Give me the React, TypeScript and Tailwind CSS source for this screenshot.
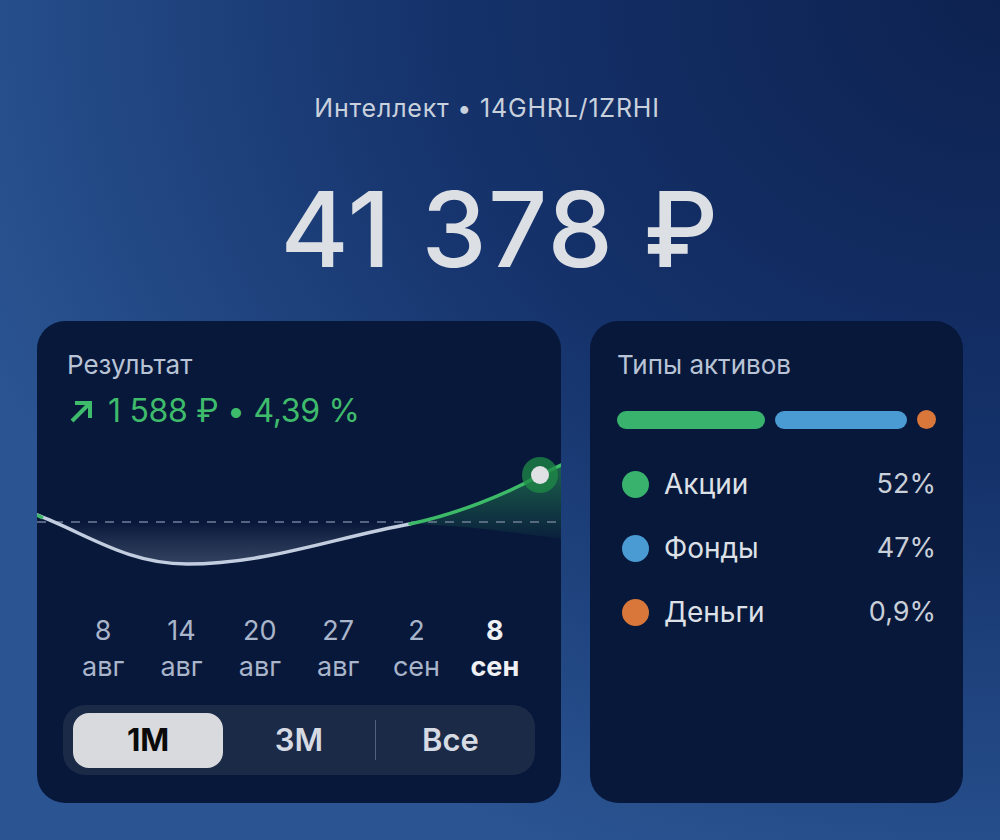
import React from "react";

const dates = [
  ["8", "авг"],
  ["14", "авг"],
  ["20", "авг"],
  ["27", "авг"],
  ["2", "сен"],
  ["8", "сен"],
];

function Chart() {
  return (
    <svg width="524" height="160" viewBox="0 0 524 160" className="block">
      <defs>
        <linearGradient id="g1" x1="0" y1="0" x2="0" y2="1">
          <stop offset="0" stopColor="#2fae5c" stopOpacity="0.5" />
          <stop offset="1" stopColor="#2fae5c" stopOpacity="0.05" />
        </linearGradient>
        <linearGradient id="g2" x1="0" y1="0" x2="0" y2="1">
          <stop offset="0" stopColor="#ffffff" stopOpacity="0" />
          <stop offset="1" stopColor="#c8d4ea" stopOpacity="0.22" />
        </linearGradient>
      </defs>
      <path d="M373,85 C420,75 470,55 503,36 L524,26 L524,100 C470,92 420,86 373,85 Z" fill="url(#g1)" />
      <path d="M10,83 L373,83 L373,85 C300,98 230,125 150,125 C90,125 50,95 10,83 Z" fill="url(#g2)" />
      <line x1="0" y1="83" x2="524" y2="83" stroke="#6f7e98" strokeWidth="1.6" strokeDasharray="9 8" />
      <path d="M0,76 C50,95 90,125 150,125 C230,125 300,98 373,85" fill="none" stroke="#c3cde0" strokeWidth="3.5" strokeLinecap="round" />
      <path d="M0,76 L6,79" fill="none" stroke="#3cba68" strokeWidth="3.5" />
      <path d="M373,85 C420,75 470,55 503,36 L524,26" fill="none" stroke="#3cba68" strokeWidth="3.5" strokeLinecap="round" />
      <circle cx="503" cy="36" r="18" fill="#1f8a45" fillOpacity="0.75" />
      <circle cx="503" cy="36" r="9" fill="#dfe1e5" />
    </svg>
  );
}

export default function App() {
  return (
    <div
      className="w-[1000px] h-[840px] overflow-hidden bg-[radial-gradient(ellipse_at_100%_0%,#0d2250_0%,#15326b_40%,#2a5592_78%)] flex flex-col items-center"
      style={{ fontFamily: "Inter, 'Noto Sans', sans-serif" }}
    >
      <div className="mt-[91px] text-[25px] leading-[34px] text-[#c9d1dd] tracking-[0.8px] ml-[-26px]">
        Интеллект • 14GHRL/1ZRHI
      </div>
      <div className="mt-[44px] text-[104px] leading-[120px] font-medium text-[#dcdfe4] tracking-[1.5px]">
        41 378 ₽
      </div>
      <div className="mt-[32px] w-full px-[37px] flex gap-[29px]">
        <div className="w-[524px] h-[482px] rounded-[28px] bg-[#08183a] flex flex-col overflow-hidden">
          <div className="pl-[30px] pt-[29px] text-[26px] leading-[30px] text-[#b9c3d6]">Результат</div>
          <div className="pl-[32px] mt-[13px] flex items-center text-[32px] leading-[36px] text-[#3fbb6c]">
            <svg width="25" height="25" viewBox="0 0 25 25" className="mr-[14px]">
              <path d="M3,22 L20,5 M6,4 L21,4 L21,19" fill="none" stroke="#3fbb6c" strokeWidth="4" />
            </svg>
            <span className="tracking-[-0.3px]">1 588 ₽ • 4,39 %</span>
          </div>
          <div className="mt-[10px]">
            <Chart />
          </div>
          <div className="mt-[14px] px-[27px] grid grid-cols-6 text-[27px] leading-[36px] text-[#a9b5ca] text-center">
            {dates.map((d, i) => (
              <div key={i} className={i === 5 ? "text-[#eef0f3] font-bold" : ""}>
                <div>{d[0]}</div>
                <div>{d[1]}</div>
              </div>
            ))}
          </div>
          <div className="mt-[20px] mx-[26px] h-[70px] rounded-[22px] bg-[#1b2a47] flex items-center px-[10px]">
            <div className="w-[150px] h-[55px] rounded-[16px] bg-[#d9dadd] flex items-center justify-center text-[31px] font-bold text-[#0a0a0a]">
              1M
            </div>
            <div className="w-[152px] text-center text-[31px] font-semibold text-[#d6dae2]">3M</div>
            <div className="w-[1px] h-[40px] bg-[#55627c]" />
            <div className="flex-1 text-center text-[31px] font-semibold text-[#d6dae2]">Все</div>
          </div>
        </div>
        <div className="w-[373px] h-[482px] rounded-[28px] bg-[#08183a] px-[27px] pt-[29px]">
          <div className="text-[26px] leading-[30px] text-[#b9c3d6]">Типы активов</div>
          <div className="mt-[30px] flex items-center gap-[10px]">
            <div className="w-[148px] h-[18px] rounded-full bg-[#38b26d]" />
            <div className="w-[133px] h-[18px] rounded-full bg-[#4a9ad3]" />
            <div className="w-[19px] h-[19px] rounded-full bg-[#d9773a]" />
          </div>
          <div className="mt-[38px] flex flex-col gap-[30px]">
            {[
              ["Акции", "52%", "bg-[#38b26d]"],
              ["Фонды", "47%", "bg-[#4a9ad3]"],
              ["Деньги", "0,9%", "bg-[#d9773a]"],
            ].map(([l, p, c]) => (
              <div key={l} className="flex items-center h-[34px]">
                <div className={`w-[27px] h-[27px] rounded-full ml-[5px] ${c}`} />
                <div className="ml-[15px] text-[28px] text-[#dde1e7] flex-1">{l}</div>
                <div className="text-[27px] text-[#c9cfd9]">{p}</div>
              </div>
            ))}
          </div>
        </div>
      </div>
    </div>
  );
}
